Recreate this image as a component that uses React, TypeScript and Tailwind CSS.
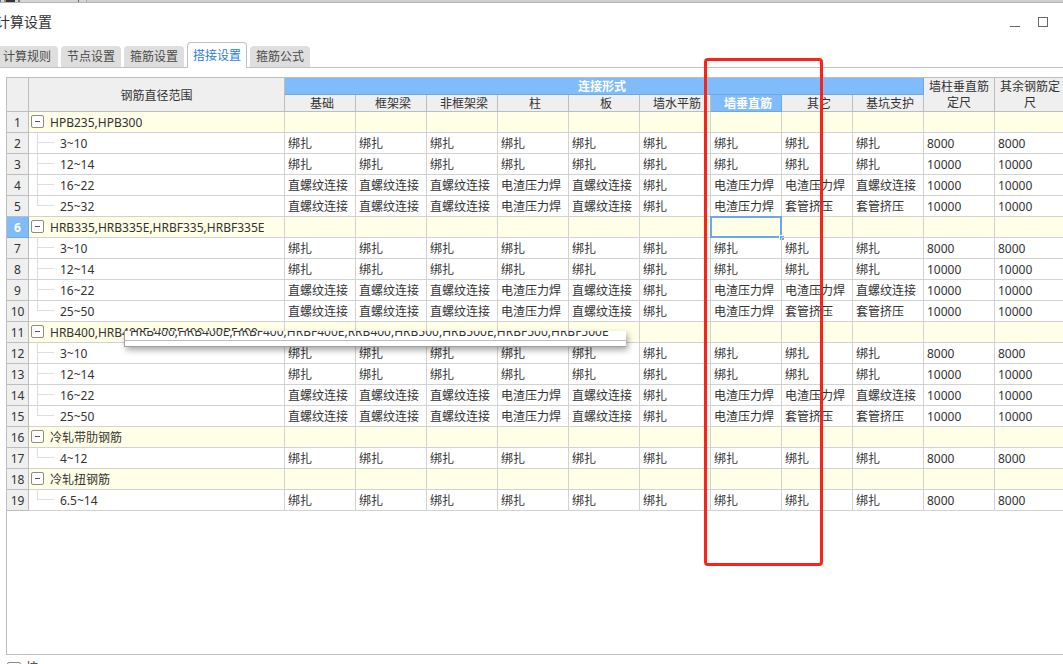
import type { ReactNode } from "react";

const tabs = ["计算规则", "节点设置", "箍筋设置", "搭接设置", "箍筋公式"];
const columns = ["基础", "框架梁", "非框架梁", "柱", "板", "墙水平筋", "墙垂直筋", "其它", "基坑支护"];

const B = "绑扎";
const L = "直螺纹连接";
const D = "电渣压力焊";
const T = "套管挤压";

const tied = [B, B, B, B, B, B, B, B, B];
const medium = [L, L, L, D, L, B, D, D, L];
const large = [L, L, L, D, L, B, D, T, T];

type Item = { name: string; values?: string[]; length?: string; last?: boolean };

const longName = "HRB400,HRB400E,HRBF400,HRBF400E,RRB400,HRB500,HRB500E,HRBF500,HRBF500E";

const group = (name: string, top: string): Item[] => [
  { name },
  { name: "3~10", values: tied, length: "8000" },
  { name: "12~14", values: tied, length: "10000" },
  { name: "16~22", values: medium, length: "10000" },
  { name: top, values: large, length: "10000", last: true },
];

const items: Item[] = [
  ...group("HPB235,HPB300", "25~32"),
  ...group("HRB335,HRB335E,HRBF335,HRBF335E", "25~50"),
  ...group(longName, "25~50"),
  { name: "冷轧带肋钢筋" },
  { name: "4~12", values: tied, length: "8000", last: true },
  { name: "冷轧扭钢筋" },
  { name: "6.5~14", values: tied, length: "8000", last: true },
];

const SELECTED_ROW = 5;
const SELECTED_COLUMN = 6;

function Cell({ children, selected = false }: { children?: ReactNode; selected?: boolean }) {
  return (
    <td className="relative h-[21px] border-r border-b border-[#d2d2d2] p-0 pt-[2px] pl-[3px] whitespace-nowrap">
      {children}
      {selected && (
        <span className="absolute -inset-px border-2 border-[#6ba8e5]">
          <span className="absolute -right-1 -bottom-1 size-[5px] border-t border-l border-white bg-[#6ba8e5]" />
        </span>
      )}
    </td>
  );
}

function NameCell({ item }: { item: Item }) {
  if (!item.values) {
    return (
      <td className="h-[21px] border-r border-b border-[#d2d2d2] p-0">
        <div className="flex h-5 items-start pr-3">
          <button
            type="button"
            aria-label="折叠"
            className="mt-[3px] ml-[2px] flex size-[13px] shrink-0 items-center justify-center rounded-[2px] border border-[#8c8c8c] bg-white"
          >
            <span className="h-px w-[5px] bg-[#555]" />
          </button>
          <span className="mt-[3px] ml-[6px] min-w-0 truncate">{item.name}</span>
        </div>
      </td>
    );
  }
  return (
    <td className="h-[21px] border-r border-b border-[#d2d2d2] p-0">
      <div className="flex h-5 items-start">
        <svg width="26" height="20" className="shrink-0" aria-hidden="true" shapeRendering="crispEdges">
          <path d={item.last ? "M8.5 0V9.5H25" : "M8.5 0V20M9 9.5H25"} fill="none" stroke="#dedede" />
        </svg>
        <span className="mt-[3px] ml-[5px]">{item.name}</span>
      </div>
    </td>
  );
}

export default function App() {
  return (
    <main className="relative flex h-screen flex-col overflow-hidden bg-white font-['Noto_Sans','Noto_Sans_CJK_SC',sans-serif] text-xs text-[#333]">
      <div className="flex h-[3px] shrink-0 border-b border-[#b5b5b5] bg-[#d6d6d6]">
        <span className="w-px bg-[#3c7fc0]" />
        <span className="ml-[3px] w-[2px] bg-[#c08040]" />
        <span className="w-[9px] bg-[#333]" />
        <span className="ml-[3px] w-px bg-[#c06a20]" />
        <span className="w-px bg-[#3c7fc0]" />
        <span className="ml-[58px] w-px bg-[#666]" />
        <span className="ml-[7px] w-px bg-[#aaa]" />
        <span className="flex-1 bg-[#cfcfcf]" />
      </div>

      <header className="flex h-[37px] shrink-0 items-center justify-between pr-[15px]">
        <h1 className="-ml-1 text-sm leading-5">计算设置</h1>
        <div className="flex items-center gap-[18px]">
          <button type="button" aria-label="最小化" className="flex h-[10px] w-[10px] items-end">
            <span className="h-px w-full bg-[#666]" />
          </button>
          <button type="button" aria-label="最大化" className="size-[10px] border border-[#666]" />
        </div>
      </header>

      <nav className="mt-[2px] flex h-[26px] shrink-0 items-end gap-[3px] border-b border-[#c3c3c3]">
        {tabs.map((tab, i) => (
          <button
            key={tab}
            type="button"
            className={
              i === 3
                ? "-mb-px h-[26px] w-[60px] rounded-t border border-b-0 border-[#bfc1c9] bg-white text-[#2a7de1]"
                : i === 0
                  ? "-ml-1 h-[21px] w-[62px] rounded-t bg-[#dedede] text-[#4a4a4a]"
                  : "h-[21px] w-[60px] rounded-t bg-[#dedede] text-[#4a4a4a]"
            }
          >
            {tab}
          </button>
        ))}
      </nav>

      <section className="mt-[9px] ml-[6px] min-h-0 flex-1 overflow-hidden border-t border-b border-l border-[#bdbdbd]">
        <table className="w-[1059px] min-w-full table-fixed border-separate border-spacing-0 leading-4">
          <colgroup>
            <col className="w-[22px]" />
            <col className="w-[256px]" />
            {columns.map((c) => (
              <col key={c} className="w-[71px]" />
            ))}
            <col className="w-[71px]" />
            <col className="w-[71px]" />
          </colgroup>
          <thead className="bg-[#efefef]">
            <tr>
              <th rowSpan={2} className="border-r border-b border-[#bdbdbd] p-0" />
              <th rowSpan={2} className="border-r border-b border-[#bdbdbd] p-0 pt-[2px] font-normal">
                钢筋直径范围
              </th>
              <th
                colSpan={9}
                className="h-[17px] border-r border-b border-[#6ba8e5] bg-[#80bbfa] p-0 pt-[2px] pr-1 leading-[14px] font-bold text-white"
              >
                连接形式
              </th>
              <th rowSpan={2} className="border-r border-b border-[#bdbdbd] p-0 pt-px font-normal">
                墙柱垂直筋定尺
              </th>
              <th rowSpan={2} className="border-r border-b border-[#bdbdbd] p-0 pt-px font-normal">
                其余钢筋定尺
              </th>
            </tr>
            <tr>
              {columns.map((c, i) => (
                <th
                  key={c}
                  className={
                    i === SELECTED_COLUMN
                      ? "h-[17px] border-r border-b border-[#6ba8e5] bg-[#80bbfa] p-0 pt-[2px] pl-1 leading-[14px] font-bold whitespace-nowrap text-white"
                      : "h-[17px] border-r border-b border-[#bdbdbd] p-0 pt-[2px] pl-1 leading-[14px] font-normal whitespace-nowrap"
                  }
                >
                  {c}
                </th>
              ))}
            </tr>
          </thead>
          <tbody>
            {items.map((item, r) => (
              <tr key={r} className={item.values ? "bg-white" : "bg-[#fffee6]"}>
                <th
                  className={
                    r === SELECTED_ROW
                      ? "h-[21px] border-r border-b border-[#6ba8e5] bg-[#80bbfa] p-0 pt-[2px] font-bold text-white"
                      : "h-[21px] border-r border-b border-[#bdbdbd] bg-[#efefef] p-0 pt-[2px] font-normal"
                  }
                >
                  {r + 1}
                </th>
                <NameCell item={item} />
                {columns.map((c, i) => (
                  <Cell key={c} selected={r === SELECTED_ROW && i === SELECTED_COLUMN}>
                    {item.values?.[i]}
                  </Cell>
                ))}
                <Cell>{item.length}</Cell>
                <Cell>{item.length}</Cell>
              </tr>
            ))}
          </tbody>
        </table>
      </section>

      <footer className="flex h-[9px] shrink-0 items-start gap-[5px] overflow-hidden pt-[7px] pl-[7px]">
        <input type="checkbox" id="tip" className="size-[14px] shrink-0 appearance-none rounded-[2px] border border-[#8c8c8c]" />
        <label htmlFor="tip" className="leading-3">
          按
        </label>
      </footer>

      <div className="absolute top-[331px] left-[124px] h-4 w-[502px] overflow-hidden border-b border-l border-[#a0a0a0] bg-white shadow-[2px_3px_6px_rgba(0,0,0,0.35)]">
        <div className="-mt-[7px] h-[17px] border-b border-[#bdbdbd] pl-[5px] leading-4 whitespace-nowrap">{longName}</div>
      </div>

      <div className="pointer-events-none absolute top-[58px] left-[704px] h-[508px] w-[119px] rounded border-3 border-[#fb2318]" />
    </main>
  );
}
